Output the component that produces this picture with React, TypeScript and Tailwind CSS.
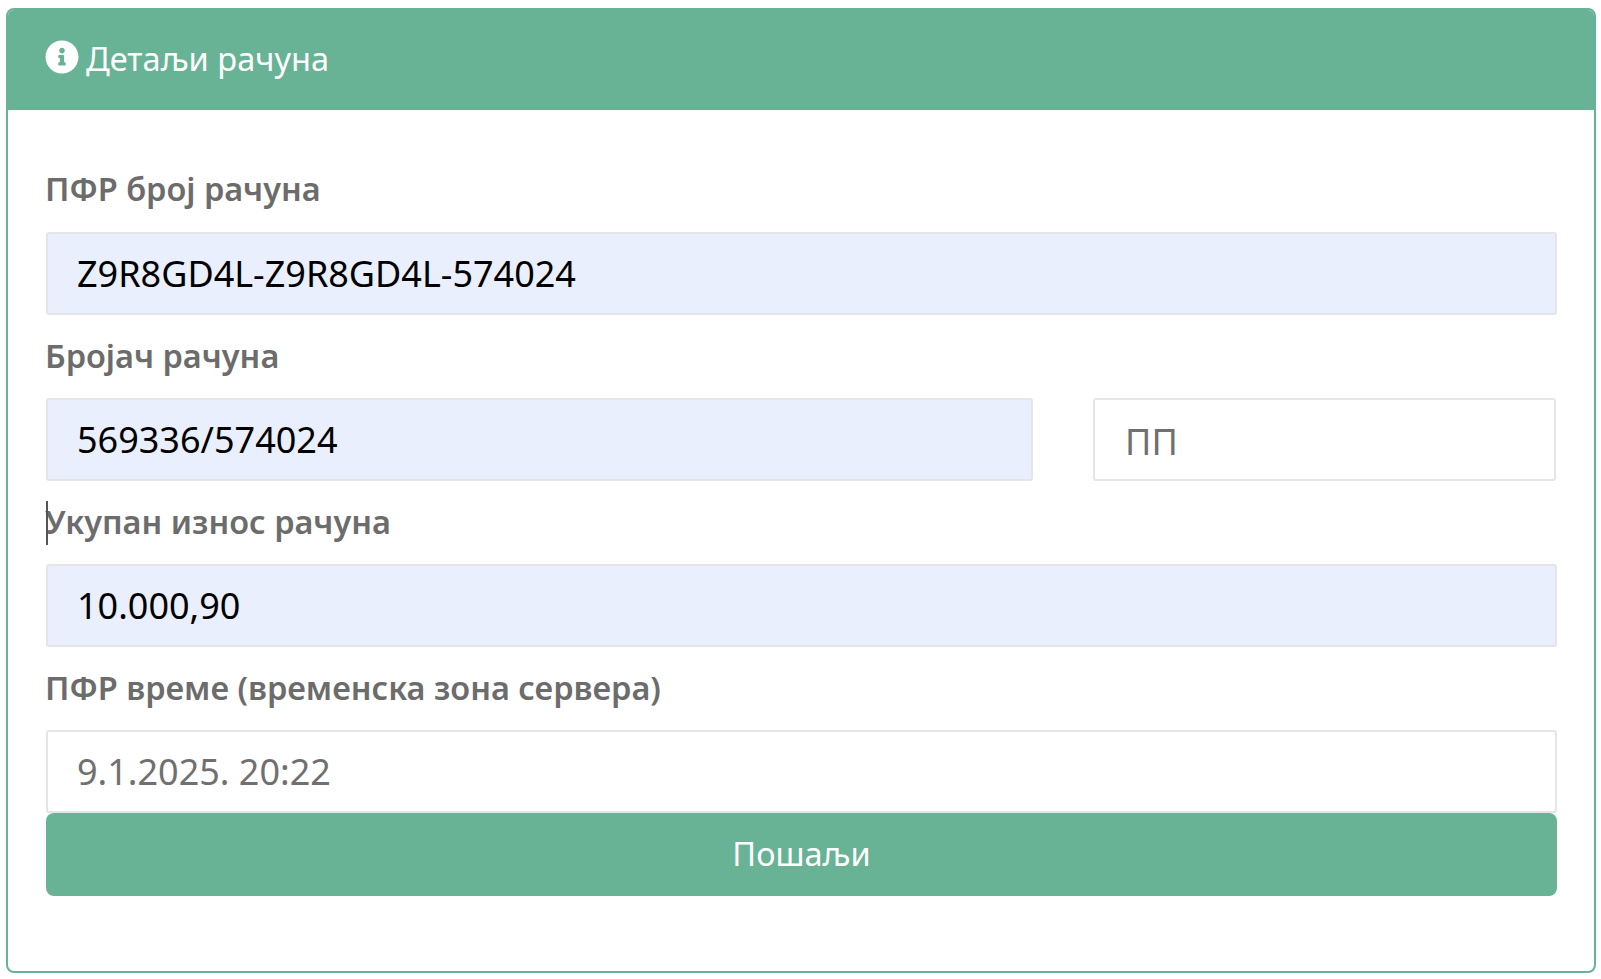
import type { ReactNode } from 'react';
import { FaInfoCircle } from 'react-icons/fa';

function Label({ children, first }: { children: ReactNode; first?: boolean }) {
  return <label className={`block h-[83px] -ml-px text-[32.5px] leading-[48px] font-semibold text-[#6c6c6c] ${first ? 'pt-[16px]' : 'pt-[17px]'}`}>{children}</label>;
}

function Field({ value, placeholder, filled, className }: { value?: string; placeholder?: string; filled?: boolean; className?: string }) {
  return (
    <input
      readOnly
      value={value}
      placeholder={placeholder}
      className={`block h-[83px] pl-[29px] pr-[30px] border-2 border-[#e5e5e5] rounded-[3px] text-[36px] outline-none placeholder:text-[#707070] ${filled ? 'bg-[#e9effd] text-black' : 'bg-white text-[#707070]'} ${className ?? 'w-full'}`}
    />
  );
}

export default function App() {
  return (
    <div className="w-[1601px] h-[979px] bg-white pt-2 pl-[6px]" style={{ fontFamily: '"Noto Sans", sans-serif' }}>
      <div className="w-[1590px] h-[965px] rounded-[8px] border-2 border-[#68b295] overflow-hidden">
        {/* Header */}
        <div className="h-[100px] bg-[#68b295] flex items-center pl-[37px] gap-[7px] text-white text-[32.6px]">
          <FaInfoCircle className="w-[34px] h-[34px] -mt-[6px]" />
          <span className="-mt-[2px]">Детаљи рачуна</span>
        </div>

        {/* Form */}
        <div className="pt-[39px] pl-[38px] pr-[37px]">
          <Label first>ПФР број рачуна</Label>
          <Field value="Z9R8GD4L-Z9R8GD4L-574024" filled />

          <Label>Бројач рачуна</Label>
          <div className="flex justify-between pr-px">
            <Field value="569336/574024" filled className="w-[987px]" />
            <Field placeholder="ПП" className="w-[463px] pt-[4px] pl-[30px]" />
          </div>

          <div className="relative">
            <Label>Укупан износ рачуна</Label>
            <span className="absolute left-0 top-[20px] w-[2px] h-[44px] bg-[#555555]" />
          </div>
          <Field value="10.000,90" filled />

          <Label>ПФР време (временска зона сервера)</Label>
          <Field value="9.1.2025. 20:22" />

          <button className="block w-full h-[83px] rounded-[8px] bg-[#68b295] text-white text-[32.5px]">Пошаљи</button>
        </div>
      </div>
    </div>
  );
}
